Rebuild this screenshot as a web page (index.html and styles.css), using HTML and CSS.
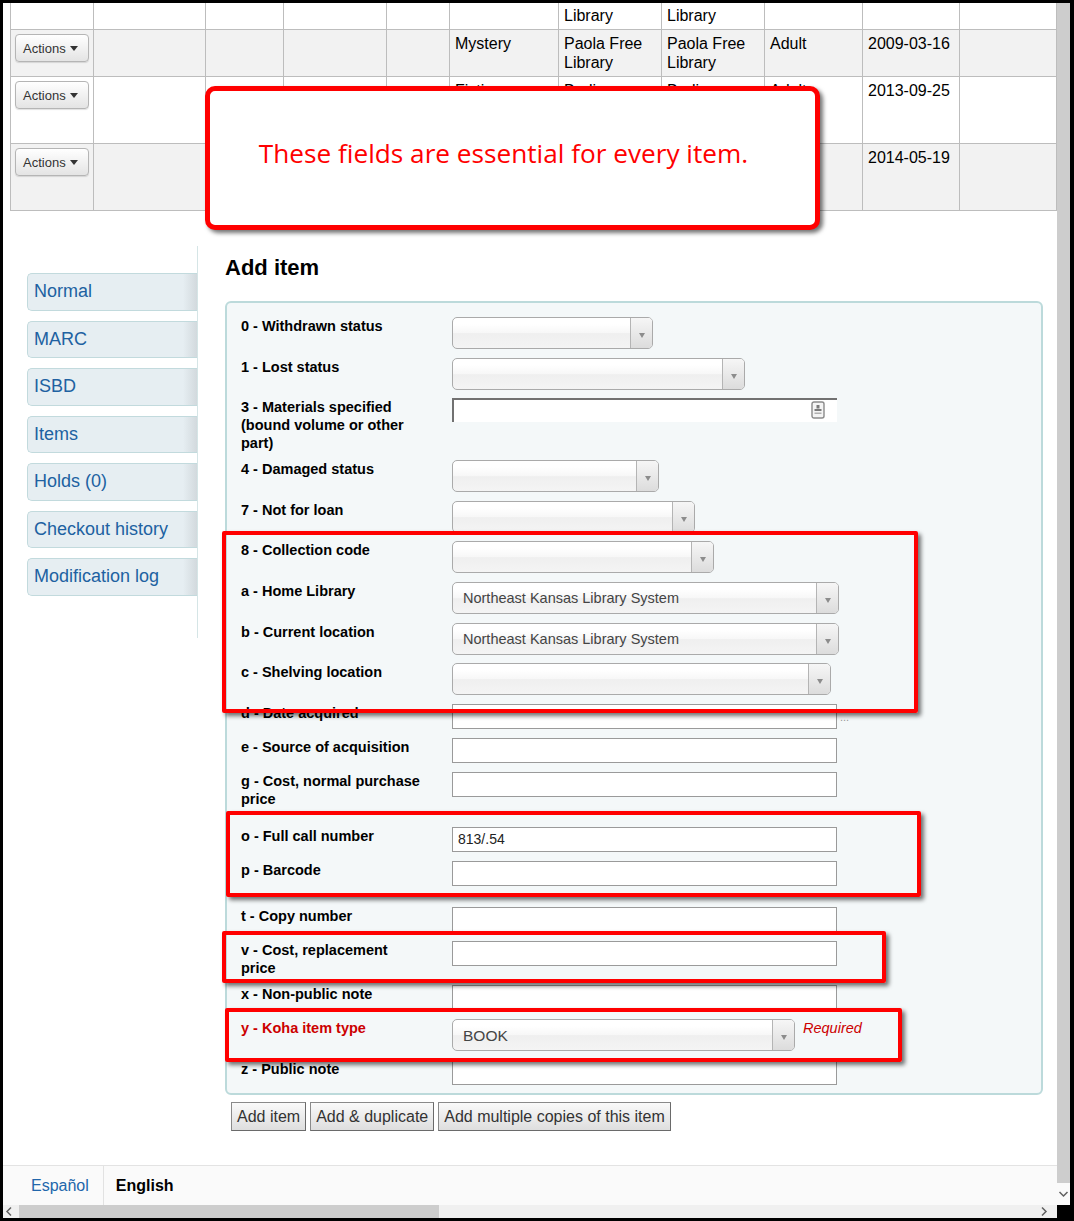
FILE: index.html
```html
<!DOCTYPE html>
<html lang="en">
<head>
<meta charset="utf-8">
<title>Add item</title>
<link rel="stylesheet" href="styles.css">
</head>
<body>
<div class="frame">
  <div class="viewport">
    <table class="results">
      <colgroup>
        <col class="c-a"><col class="c-b"><col class="c-c"><col class="c-d"><col class="c-e"><col class="c-f"><col class="c-g"><col class="c-h"><col class="c-i"><col class="c-j"><col class="c-k"><col class="c-l">
      </colgroup>
      <tbody>
        <tr>
          <td></td><td></td><td></td><td></td><td></td><td>Fiction</td><td>Paola Free Library</td><td>Paola Free Library</td><td>Adult</td><td>2008-11-02</td><td></td><td></td>
        </tr>
        <tr class="alt">
          <td><span class="actions">Actions <span class="caret"></span></span></td><td></td><td></td><td></td><td></td><td>Mystery</td><td>Paola Free Library</td><td>Paola Free Library</td><td>Adult</td><td>2009-03-16</td><td></td><td></td>
        </tr>
        <tr class="tall">
          <td><span class="actions">Actions <span class="caret"></span></span></td><td></td><td></td><td></td><td></td><td>Fiction</td><td>Burlingame Community Library</td><td>Burlingame Community Library</td><td>Adult</td><td>2013-09-25</td><td></td><td></td>
        </tr>
        <tr class="alt tall">
          <td><span class="actions">Actions <span class="caret"></span></span></td><td></td><td></td><td></td><td></td><td>Fiction</td><td>Burlingame Community Library</td><td>Burlingame Community Library</td><td>Adult</td><td>2014-05-19</td><td></td><td></td>
        </tr>
      </tbody>
    </table>

    <div class="layout">
      <ul class="sidebar">
        <li class="tab">Normal</li>
        <li class="tab">MARC</li>
        <li class="tab">ISBD</li>
        <li class="tab">Items</li>
        <li class="tab">Holds (0)</li>
        <li class="tab">Checkout history</li>
        <li class="tab">Modification log</li>
      </ul>

      <div class="content">
        <h1>Add item</h1>
        <div class="fieldset">
          <ol class="rows">
            <li><label>0 - Withdrawn status</label><div class="sel w201"><span class="sel-text"></span><span class="sel-arrow"></span></div></li>
            <li class="m8"><label>1 - Lost status</label><div class="sel w293"><span class="sel-text"></span><span class="sel-arrow"></span></div></li>
            <li class="m8"><label>3 - Materials specified (bound volume or other part)</label>
              <div class="mat-wrap"><div class="mat-input"></div>
                <svg class="mat-icon" width="14" height="18" viewBox="0 0 14 18"><rect x="1" y="1" width="12" height="16" rx="2" fill="#f4f4f4" stroke="#8a8a8a" stroke-width="1.4"/><rect x="5.5" y="4" width="3" height="3.5" fill="#7a7a7a"/><rect x="3.5" y="8" width="7" height="2" fill="#7a7a7a"/><rect x="3.5" y="11.5" width="7" height="1.5" fill="#b0b0b0"/></svg>
              </div></li>
            <li><label>4 - Damaged status</label><div class="sel w207"><span class="sel-text"></span><span class="sel-arrow"></span></div></li>
            <li class="m8"><label>7 - Not for loan</label><div class="sel w243"><span class="sel-text"></span><span class="sel-arrow"></span></div></li>
            <li><label>8 - Collection code</label><div class="sel w262"><span class="sel-text"></span><span class="sel-arrow"></span></div></li>
            <li><label>a - Home Library</label><div class="sel w387"><span class="sel-text">Northeast Kansas Library System</span><span class="sel-arrow"></span></div></li>
            <li class="m8"><label>b - Current location</label><div class="sel w387"><span class="sel-text">Northeast Kansas Library System</span><span class="sel-arrow"></span></div></li>
            <li><label>c - Shelving location</label><div class="sel w379"><span class="sel-text"></span><span class="sel-arrow"></span></div></li>
            <li><label>d - Date acquired</label><div class="inp"></div><span class="dots">...</span></li>
            <li><label>e - Source of acquisition</label><div class="inp"></div></li>
            <li class="extra-a"><label>g - Cost, normal purchase price</label><div class="inp"></div></li>
            <li><label>o - Full call number</label><div class="inp">813/.54</div></li>
            <li class="extra-b"><label>p - Barcode</label><div class="inp"></div></li>
            <li><label>t - Copy number</label><div class="inp"></div></li>
            <li class="m8"><label>v - Cost, replacement price</label><div class="inp"></div></li>
            <li><label>x - Non-public note</label><div class="inp"></div></li>
            <li><label class="required">y - Koha item type</label><div class="sel w343"><span class="sel-text book">BOOK</span><span class="sel-arrow"></span></div><span class="req-note">Required</span></li>
            <li><label>z - Public note</label><div class="inp"></div></li>
          </ol>
        </div>
        <div class="buttons">
          <span class="btn">Add item</span>
          <span class="btn">Add &amp; duplicate</span>
          <span class="btn">Add multiple copies of this item</span>
        </div>
      </div>
    </div>

    <div class="footer">
      <span class="lang lang-link">Español</span>
      <span class="lang lang-current">English</span>
    </div>

    <div class="callout">These fields are essential for every item.</div>
    <div class="hl hl-1"></div>
    <div class="hl hl-2"></div>
    <div class="hl hl-3"></div>
    <div class="hl hl-4"></div>
  </div>

  <div class="vbar">
    <div class="vthumb"></div>
    <div class="varrow">
      <svg width="11" height="8" viewBox="0 0 11 8"><polyline points="1.5,2 5.5,6 9.5,2" fill="none" stroke="#606060" stroke-width="1.5"/></svg>
    </div>
  </div>
  <div class="hbar">
    <svg class="harrow" width="8" height="11" viewBox="0 0 8 11"><polyline points="6,1.5 2,5.5 6,9.5" fill="none" stroke="#606060" stroke-width="1.5"/></svg>
    <div class="hthumb"></div>
    <div class="hspace"></div>
    <svg class="harrow harrow-r" width="8" height="11" viewBox="0 0 8 11"><polyline points="2,1.5 6,5.5 2,9.5" fill="none" stroke="#606060" stroke-width="1.5"/></svg>
  </div>
</div>
</body>
</html>
```

FILE: styles.css
```css
html, body {
  margin: 0;
  padding: 0;
  overflow: hidden;
  background: #000;
}

.frame {
  margin: 3px 4px 3px 3px;
  display: grid;
  grid-template-columns: 1054px 13px;
  grid-template-rows: 1202px 13px;
  font-family: "Liberation Sans", Arial, sans-serif;
}

.viewport {
  grid-column: 1;
  grid-row: 1;
  position: relative;
  overflow: hidden;
  background: #fff;
  display: flex;
  flex-direction: column;
  align-items: flex-start;
}

/* ---------- results table ---------- */
.results {
  margin: -21px 0 0 7px;
  border-collapse: collapse;
  table-layout: fixed;
  width: 1106px;
  flex-shrink: 0;
  font-size: 16px;
  line-height: 19px;
  color: #000;
}
.c-a { width: 83px; }
.c-b { width: 112px; }
.c-c { width: 78px; }
.c-d { width: 103px; }
.c-e { width: 63px; }
.c-f { width: 109px; }
.c-g { width: 103px; }
.c-h { width: 103px; }
.c-i { width: 98px; }
.c-j { width: 97px; }
.c-k { width: 97px; }
.c-l { width: 60px; }

.results td {
  border: 1px solid #bdbdbd;
  padding: 4px 5px;
  vertical-align: top;
}
.results tr.tall td { padding-bottom: 5px; }
.results tr.alt td { background: #f2f2f2; }

.actions {
  display: inline-flex;
  align-items: center;
  box-sizing: border-box;
  height: 28px;
  width: 74px;
  margin-left: -1px;
  padding: 0 0 0 7px;
  border: 1px solid #b5b5b5;
  border-radius: 4px;
  background: linear-gradient(#ffffff, #e4e4e4);
  box-shadow: 0 1px 1px rgba(0,0,0,0.12);
  font-size: 13px;
  color: #333;
  gap: 4px;
}
.caret {
  width: 0;
  height: 0;
  border-left: 4.5px solid transparent;
  border-right: 4.5px solid transparent;
  border-top: 5px solid #333;
}

/* ---------- layout ---------- */
.layout {
  display: flex;
  align-items: flex-start;
  margin-top: 35px;
}

.sidebar {
  list-style: none;
  margin: 0 0 0 24px;
  padding: 27px 0 0 0;
  width: 171px;
  height: 392px;
  box-sizing: border-box;
  border-right: 1px solid #d5e5e6;
  flex-shrink: 0;
}
.tab {
  box-sizing: border-box;
  height: 37.5px;
  margin-bottom: 10px;
  padding-left: 6px;
  border: 1px solid #c2dadd;
  border-right: none;
  border-radius: 5px 0 0 5px;
  background: linear-gradient(to right, #e6eef2 0, #e6eef2 calc(100% - 14px), #d2d9dd 100%);
  font-size: 18px;
  line-height: 35px;
  color: #2061a1;
}

.content {
  margin-left: 27px;
  width: 818px;
}

h1 {
  margin: 9px 0 20px;
  font-size: 22px;
  line-height: 26px;
  font-weight: bold;
  color: #000;
}

.fieldset {
  border: 2px solid #bcdadb;
  border-radius: 6px;
  background: #f4f8f9;
  padding: 14px 14px 8px;
}

.rows {
  list-style: none;
  margin: 0;
  padding: 0;
}
.rows li {
  display: flex;
  align-items: flex-start;
  margin-bottom: 9px;
}
.rows li:last-child { margin-bottom: 0; }
.rows li.m8 { margin-bottom: 8px; }
.rows li.extra-a { margin-bottom: 19px; }
.rows li.extra-b { margin-bottom: 21px; }

.rows label {
  width: 182px;
  margin-right: 29px;
  flex-shrink: 0;
  font-size: 14.5px;
  line-height: 18px;
  font-weight: bold;
  color: #000;
}
.rows label.required { color: #cc0000; }

/* select imitation */
.sel {
  display: flex;
  box-sizing: border-box;
  height: 32px;
  border: 1px solid #aaa;
  border-radius: 5px;
  background: linear-gradient(#ffffff 20%, #f7f7f7 50%, #efefef 52%, #f4f4f4 100%);
  overflow: hidden;
}
.w201 { width: 201px; }
.w207 { width: 207px; }
.w243 { width: 243px; }
.w262 { width: 262px; }
.w293 { width: 293px; }
.w343 { width: 343px; }
.w379 { width: 379px; }
.w387 { width: 387px; }

.sel-text {
  flex: 1;
  padding-left: 10px;
  font-size: 14.5px;
  line-height: 31px;
  color: #444;
  white-space: nowrap;
}
.sel-text.book { font-size: 15.5px; }
.sel-arrow {
  width: 22px;
  border-left: 1px solid #b4b4b4;
  background: linear-gradient(#f6f6f6, #dcdcdc);
  display: flex;
  align-items: center;
  justify-content: center;
  padding-top: 4px;
  box-sizing: border-box;
}
.sel-arrow::after {
  content: "";
  width: 0;
  height: 0;
  border-left: 3.5px solid transparent;
  border-right: 3.5px solid transparent;
  border-top: 5px solid #8c8c8c;
}

.inp {
  box-sizing: border-box;
  width: 385px;
  height: 25px;
  border: 1px solid #9a9a9a;
  background: #fff;
  padding-left: 5px;
  font-size: 14px;
  line-height: 23px;
  color: #222;
}

.mat-wrap {
  position: relative;
  width: 385px;
  height: 24px;
}
.mat-input {
  box-sizing: border-box;
  width: 385px;
  height: 24px;
  border-top: 2px solid #717171;
  border-left: 2px solid #717171;
  background: #fff;
}
.mat-icon {
  position: absolute;
  left: 359px;
  top: 3px;
}

.dots {
  margin-left: 3px;
  margin-top: 6px;
  font-size: 11px;
  line-height: 14px;
  color: #999;
}

.req-note {
  margin-left: 8px;
  font-size: 14.5px;
  line-height: 18px;
  font-style: italic;
  color: #cc0000;
}

/* buttons */
.buttons {
  display: flex;
  gap: 4px;
  margin: 7px 0 0 6px;
}
.btn {
  box-sizing: border-box;
  height: 29px;
  padding: 0 5px;
  border: 1px solid #8a8a8a;
  border-right-color: #6a6a6a;
  border-bottom-color: #6a6a6a;
  background: linear-gradient(#fafafa, #dedede);
  font-size: 16px;
  line-height: 27px;
  color: #333;
  white-space: nowrap;
}

/* footer */
.footer {
  margin-top: auto;
  align-self: stretch;
  height: 40px;
  box-sizing: border-box;
  border-top: 1px solid #e3e3e3;
  background: #fafafa;
  display: flex;
  font-size: 16px;
}
.lang {
  display: flex;
  align-items: center;
}
.lang-link {
  padding: 0 14px 0 28px;
  border-right: 1px solid #e2e2e2;
  color: #2166ab;
}
.lang-current {
  padding-left: 12px;
  font-weight: bold;
  color: #000;
}

/* overlays */
.callout {
  position: absolute;
  left: 202px;
  top: 83px;
  width: 615px;
  height: 144px;
  box-sizing: border-box;
  border: 5px solid #ff0000;
  border-radius: 10px;
  background: #fff;
  box-shadow: 3px 3px 4px rgba(0,0,0,0.55);
  padding: 46px 18px 0 0;
  text-align: center;
  font-family: "Open Sans", "Noto Sans", sans-serif;
  font-size: 26.2px;
  line-height: 32px;
  color: #ff0000;
  white-space: nowrap;
}

.hl {
  position: absolute;
  box-sizing: border-box;
  border: 4px solid #ff0000;
  border-radius: 2px;
  box-shadow: 3px 3px 4px rgba(0,0,0,0.55);
}
.hl-1 { left: 219px; top: 528px; width: 696px; height: 182px; }
.hl-2 { left: 223px; top: 808px; width: 695px; height: 86px; }
.hl-3 { left: 219px; top: 928px; width: 664px; height: 52px; }
.hl-4 { left: 222px; top: 1005px; width: 677px; height: 54px; }

/* scrollbars */
.vbar {
  grid-column: 2;
  grid-row: 1;
  display: flex;
  flex-direction: column;
}
.vthumb {
  flex: 1;
  background: #cdcdcd;
}
.varrow {
  height: 22px;
  background: #fafafa;
  display: flex;
  align-items: center;
  justify-content: center;
}
.hbar {
  grid-column: 1;
  grid-row: 2;
  background: #f0f0f0;
  display: flex;
  align-items: center;
}
.harrow {
  margin: 0 3px 0 2px;
}
.hthumb {
  width: 420px;
  height: 13px;
  margin-left: 3px;
  background: #cdcdcd;
}
.hspace { flex: 1; }
.harrow-r { margin: 0 9px 0 0; }
```
